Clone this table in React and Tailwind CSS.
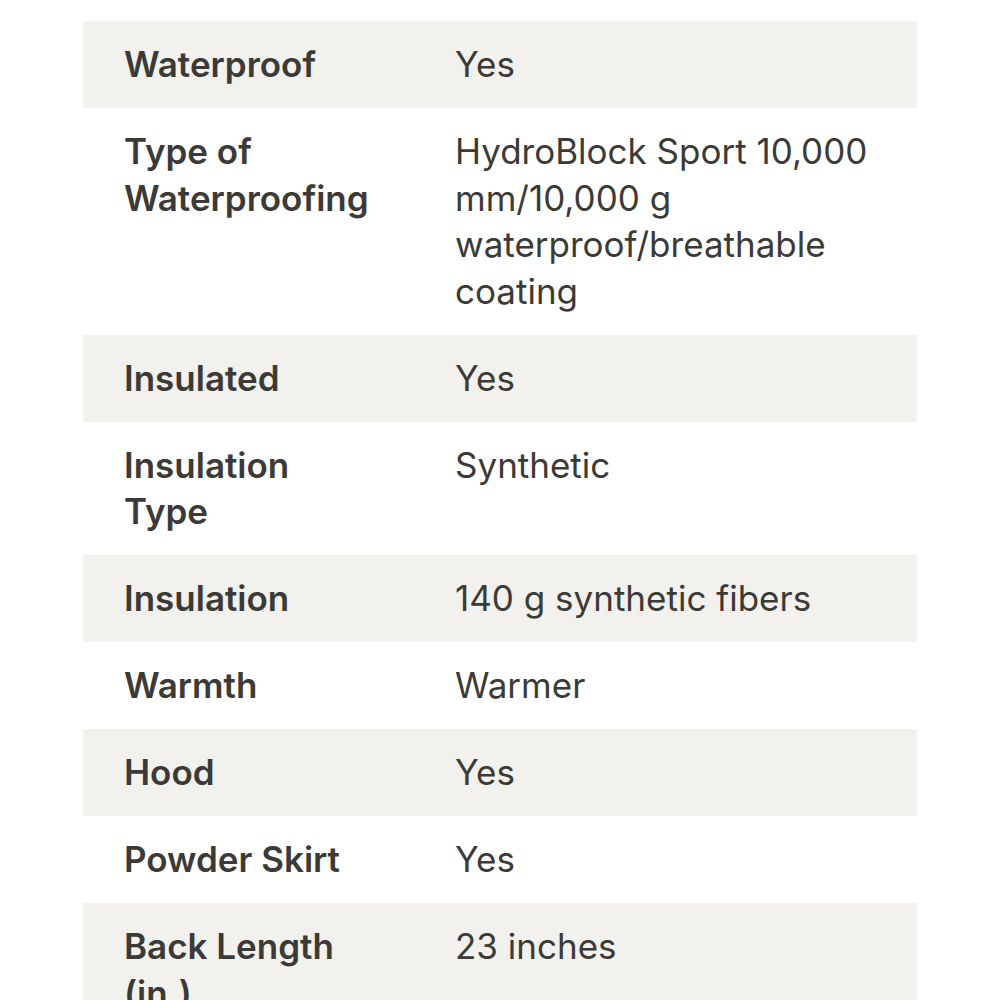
import React from 'react';

const specs = [
  { label: 'Waterproof', value: 'Yes' },
  { label: 'Type of Waterproofing', value: 'HydroBlock Sport 10,000 mm/10,000 g waterproof/breathable coating' },
  { label: 'Insulated', value: 'Yes' },
  { label: 'Insulation Type', value: 'Synthetic' },
  { label: 'Insulation', value: '140 g synthetic fibers' },
  { label: 'Warmth', value: 'Warmer' },
  { label: 'Hood', value: 'Yes' },
  { label: 'Powder Skirt', value: 'Yes' },
  { label: 'Back Length (in.)', value: '23 inches' },
  { label: 'Pit Zips', value: 'Yes' },
];

export default function App() {
  return (
    <div className="min-h-screen bg-white pt-[21px] px-[83px] font-['Inter',sans-serif] text-[#3b3a37]">
      <div className="flex flex-col">
        {specs.map((row, i) => (
          <div
            key={row.label}
            className={`flex py-[20.25px] text-[35px] leading-[46.5px] ${i % 2 === 0 ? 'bg-[#f2f1ed]' : 'bg-white'}`}
          >
            <div className="w-[372px] shrink-0 pl-[41px] pr-[87px] font-semibold">{row.label}</div>
            <div className="flex-1 pr-[16px]">{row.value}</div>
          </div>
        ))}
      </div>
    </div>
  );
}
